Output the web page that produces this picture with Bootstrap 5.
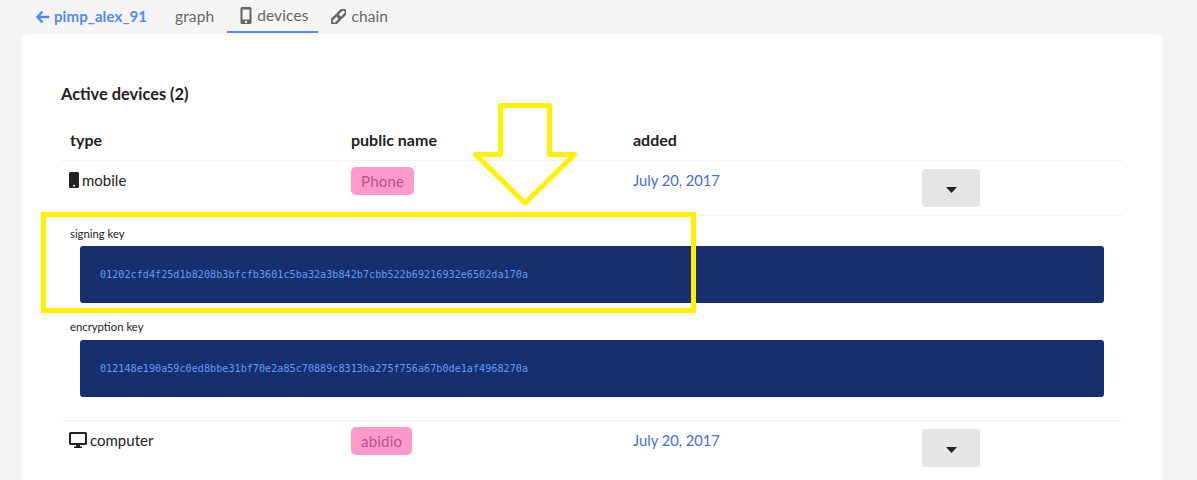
<!DOCTYPE html>
<html lang="en">
<head>
  <meta charset="UTF-8">
  <meta name="viewport" content="width=device-width, initial-scale=1.0">
  <title>Devices</title>
  <link href="https://cdn.jsdelivr.net/npm/bootstrap@5.3.3/dist/css/bootstrap.min.css" rel="stylesheet">
  <style>
    html, body { height: 480px; overflow: hidden; }
    body {
      background-color: #f5f5f5;
      font-family: "Lato", "Liberation Sans", sans-serif;
      color: #222;
      position: relative;
    }
    .top-tabs { height: 34px; padding-left: 27px; }
    .top-tabs a {
      display: flex;
      align-items: center;
      gap: 5px;
      height: 33px;
      padding: 0 9px;
      font-size: 15.5px;
      letter-spacing: .1px;
      color: #666;
      text-decoration: none;
    }
    .top-tabs a.back-link { color: #4d8cf5; font-weight: 700; font-size: 15px; gap: 4px; margin-right: 10px; }
    .top-tabs a.on { border-bottom: 2px solid #4d8cf5; padding: 0 10px 0 13px; margin: 0 4px 0 4px; }
    .sheet {
      margin: 0 35px 0 22px;
      height: 460px;
      background: #fff;
      border-radius: 6px 6px 0 0;
      padding: 50px 40px 0 40px;
    }
    .sheet h2 { font-size: 16.4px; font-weight: 700; line-height: 20px; margin: 0 0 26px -1px; }
    .dev-table { table-layout: fixed; width: 100%; border-collapse: collapse; font-size: 15px; }
    .dev-table .c-type { width: 281px; }
    .dev-table .c-name { width: 282px; }
    .dev-table .c-date { width: 289px; }
    .dev-table th { font-weight: 700; font-size: 16px; padding: 0 8px 10px; line-height: 20px; }
    .dev-table td { padding: 8px; vertical-align: top; border-top: 1px solid #f1f1f1; }
    .dev-table tr.main-row td { height: 55px; }
    .kind { display: flex; align-items: center; gap: 3px; line-height: 22px; margin-left: -1px; }
    .pill {
      display: block;
      width: fit-content;
      background: #ff99cc;
      color: #b0568f;
      border-radius: 5px;
      padding: 3px 10px;
      margin-top: -2px;
      line-height: 22px;
      height: 28px;
      letter-spacing: .2px;
    }
    .date { color: #3f6ce6; line-height: 22px; font-size: 14.7px; }
    .drop-btn {
      width: 58px;
      height: 38px;
      background: #e5e5e5;
      border: 0;
      border-radius: 3px;
      padding: 0;
    }
    .dev-table td.key-cell { height: 205px; padding: 11px 18px 0 8px; }
    .key-name { font-size: 11.3px; line-height: 14px; margin-bottom: 5px; }
    .key-box + .key-name { margin-bottom: 6px; }
    .key-box {
      margin-left: 10px;
      height: 57px;
      background: #182f6f;
      border-radius: 3px;
      padding-left: 20px;
      display: flex;
      align-items: center;
      font-family: "DejaVu Sans Mono", monospace;
      font-size: 10.16px;
      color: #5f9bf7;
      margin-bottom: 17px;
    }
    .marks { position: absolute; left: 0; top: 0; pointer-events: none; }
  </style>
</head>
<body>
  <nav class="top-tabs d-flex">
    <a href="#" class="back-link">
      <svg width="14" height="14" viewBox="0 0 14 14"><path d="M6.500 1.500 1.500 7l5 5.500M2 7h11.500" fill="none" stroke="#4d8cf5" stroke-width="2.400"/></svg>
      pimp_alex_91
    </a>
    <a href="#">graph</a>
    <a href="#" class="on">
      <svg width="12" height="17" viewBox="0 0 12 17"><path fill="#666" d="M2 0h8a1.500 1.500 0 0 1 1.500 1.500v14A1.500 1.500 0 0 1 10 17H2a1.500 1.500 0 0 1-1.500-1.500v-14A1.500 1.500 0 0 1 2 0Zm.500 2.500v10h7v-10Zm3.500 11.200a1.200 1.200 0 1 0 0 2.400 1.200 1.200 0 0 0 0-2.400Z"/></svg>
      devices
    </a>
    <a href="#">
      <svg width="15" height="15" viewBox="0 0 15 15"><g fill="none" stroke="#666" stroke-width="2.400" transform="rotate(-45 7.500 7.500)"><rect x="-1.500" y="5" width="9.500" height="5.500" rx="2.700"/><rect x="7" y="5" width="9.500" height="5.500" rx="2.700"/></g></svg>
      chain
    </a>
  </nav>

  <div class="sheet">
    <h2>Active devices (2)</h2>
    <table class="dev-table">
      <colgroup>
        <col class="c-type"><col class="c-name"><col class="c-date"><col>
      </colgroup>
      <thead>
        <tr><th>type</th><th>public name</th><th>added</th><th></th></tr>
      </thead>
      <tbody>
        <tr class="main-row">
          <td>
            <div class="kind">
              <svg width="10" height="16" viewBox="0 0 10 16"><path fill="#222" d="M1.500 0h7A1.500 1.500 0 0 1 10 1.500v13A1.500 1.500 0 0 1 8.500 16h-7A1.500 1.500 0 0 1 0 14.500v-13A1.500 1.500 0 0 1 1.500 0Zm3.500 12.800a1 1 0 1 0 0 2 1 1 0 0 0 0-2Z"/></svg>
              mobile
            </div>
          </td>
          <td><span class="pill">Phone</span></td>
          <td><div class="date">July 20, 2017</div></td>
          <td><button class="drop-btn" type="button"><svg width="11" height="6" viewBox="0 0 11 6"><path fill="#222" d="M0 0h11L5.500 6Z"/></svg></button></td>
        </tr>
        <tr>
          <td colspan="4" class="key-cell">
            <div class="key-name">signing key</div>
            <div class="key-box">01202cfd4f25d1b8208b3bfcfb3601c5ba32a3b842b7cbb522b69216932e6502da170a</div>
            <div class="key-name">encryption key</div>
            <div class="key-box">012148e190a59c0ed8bbe31bf70e2a85c70889c8313ba275f756a67b0de1af4968270a</div>
          </td>
        </tr>
        <tr class="main-row">
          <td>
            <div class="kind">
              <svg width="18" height="16" viewBox="0 0 18 16"><path fill="#222" d="M1.500 0h15A1.500 1.500 0 0 1 18 1.500v10a1.500 1.500 0 0 1-1.500 1.500H11v1.500h2V16H5v-1.500h2V13H1.500A1.500 1.500 0 0 1 0 11.500v-10A1.500 1.500 0 0 1 1.500 0ZM2 2v9h14V2Z"/></svg>
              computer
            </div>
          </td>
          <td><span class="pill">abidio</span></td>
          <td><div class="date">July 20, 2017</div></td>
          <td><button class="drop-btn" type="button"><svg width="11" height="6" viewBox="0 0 11 6"><path fill="#222" d="M0 0h11L5.500 6Z"/></svg></button></td>
        </tr>
      </tbody>
    </table>
  </div>

  <!-- yellow annotation drawn over the screenshot -->
  <svg class="marks" width="1197" height="480" viewBox="0 0 1197 480">
    <rect x="43.500" y="214.500" width="650" height="96" fill="none" stroke="#fff200" stroke-width="5"/>
    <path d="M500.500 105.500h49v49h25l-49.500 48.500-49.500-48.500h25Z" fill="none" stroke="#fff200" stroke-width="5" stroke-linejoin="round"/>
  </svg>

  <script src="https://cdn.jsdelivr.net/npm/bootstrap@5.3.3/dist/js/bootstrap.bundle.min.js"></script>
</body>
</html>
